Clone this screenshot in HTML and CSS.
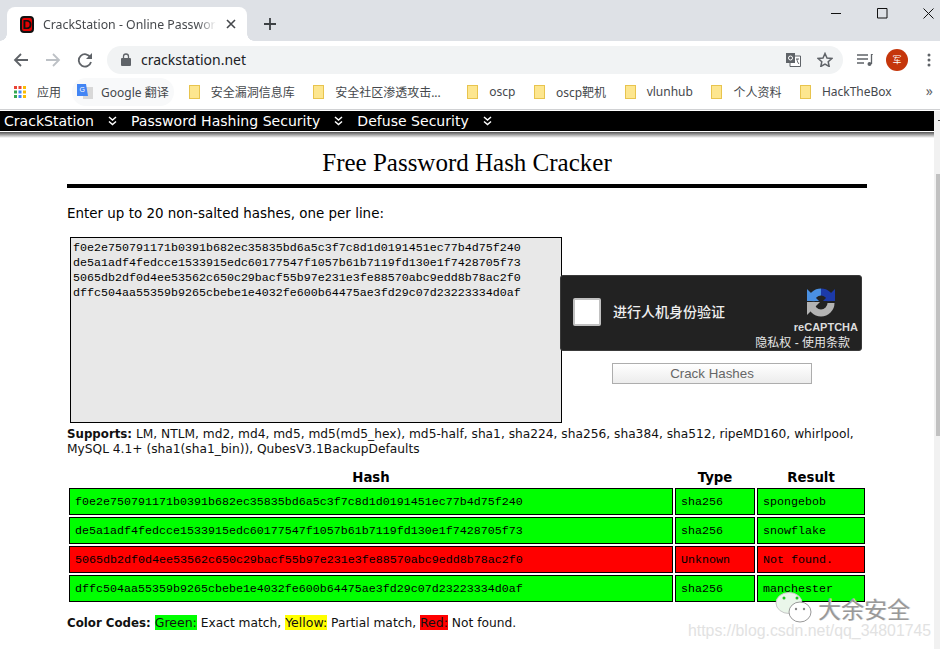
FILE: index.html
```html
<!DOCTYPE html>
<html lang="en">
<head>
<meta charset="utf-8">
<title>CrackStation - Online Password Hash Cracking</title>
<link rel="stylesheet" href="styles.css">
</head>
<body>
<header class="chrome">
  <div class="tabstrip">
    <div class="tab">
      <span class="favicon">D</span>
      <span class="tab-title">CrackStation - Online Passwor</span>
      <svg class="tab-x" width="10" height="10" viewBox="0 0 10 10"><path d="M1 1l8 8M9 1l-8 8" stroke="#45484c" stroke-width="1.6"/></svg>
    </div>
    <svg class="newtab" width="12" height="12" viewBox="0 0 12 12"><path d="M6 0v12M0 6h12" stroke="#3c4043" stroke-width="1.8"/></svg>
    <div class="winctl">
      <svg width="11" height="11" viewBox="0 0 11 11"><path d="M0 5.500h10" stroke="#111" stroke-width="1"/></svg>
      <svg width="11" height="11" viewBox="0 0 11 11"><path d="M.5 .5h9.500v9.500h-9.500z" fill="none" stroke="#111" stroke-width="1"/></svg>
      <svg width="11" height="11" viewBox="0 0 11 11"><path d="M.5 .5l10 10M10.500 .5l-10 10" stroke="#111" stroke-width="1"/></svg>
    </div>
  </div>
  <div class="toolbar">
    <svg class="nav-ico" width="16" height="16" viewBox="0 0 16 16"><path d="M15 8H2M8 2L2 8l6 6" fill="none" stroke="#5f6368" stroke-width="1.800"/></svg>
    <svg class="nav-ico" width="16" height="16" viewBox="0 0 16 16"><path d="M1 8h13M8 2l6 6-6 6" fill="none" stroke="#bdc1c6" stroke-width="1.800"/></svg>
    <svg class="nav-ico" width="16" height="16" viewBox="0 0 16 16"><path d="M13.500 5.500A6.200 6.200 0 1 0 14 10" fill="none" stroke="#5f6368" stroke-width="1.800"/><path d="M15 1v6H9z" fill="#5f6368"/></svg>
    <div class="omnibox">
      <svg class="lock" width="10" height="13" viewBox="0 0 10 13"><path d="M1 5h8a1 1 0 0 1 1 1v6a1 1 0 0 1-1 1H1a1 1 0 0 1-1-1V6a1 1 0 0 1 1-1z" fill="#5f6368"/><path d="M2.500 5V3.500a2.500 2.500 0 0 1 5 0V5" fill="none" stroke="#5f6368" stroke-width="1.300"/></svg>
      <span class="url">crackstation.net</span>
      <svg class="translate" width="15" height="14" viewBox="0 0 15 14"><path d="M4 3h10.500v10.500H4z" fill="#fff" stroke="#5f6368"/><path d="M0 0h9v10H0z" fill="#5f6368"/><circle cx="4.500" cy="5" r="2" fill="none" stroke="#fff"/><path d="M10 6h3M11 6c0 2 1 4 2 5" fill="none" stroke="#5f6368"/></svg>
      <svg class="star" width="16" height="15" viewBox="0 0 16 15"><path d="M8 1.500l2 4.500 4.800.5-3.600 3.200 1 4.800L8 12l-4.200 2.500 1-4.800L1.200 6.500 6 6z" fill="none" stroke="#5f6368" stroke-width="1.500"/></svg>
    </div>
    <svg class="media" width="16" height="12" viewBox="0 0 16 12"><path d="M0 1h11M0 5h11M0 9h7" stroke="#5f6368" stroke-width="1.300"/><path d="M14.500 0h1.500M14.500 0v10" stroke="#5f6368" stroke-width="1.300" fill="none"/><circle cx="12.500" cy="10" r="2" fill="#5f6368"/></svg>
    <span class="avatar">军</span>
    <svg class="menu" width="4" height="14" viewBox="0 0 4 14"><circle cx="2" cy="2" r="1.500" fill="#5f6368"/><circle cx="2" cy="7" r="1.500" fill="#5f6368"/><circle cx="2" cy="12" r="1.500" fill="#5f6368"/></svg>
  </div>
  <div class="bookmarks">
    <span class="bm bm-apps">
      <svg width="12" height="12" viewBox="0 0 12 12"><rect width="3" height="3" fill="#ea4335"/><rect x="4.500" width="3" height="3" fill="#ea4335"/><rect x="9" width="3" height="3" fill="#fbbc04"/><rect y="4.500" width="3" height="3" fill="#34a853"/><rect x="4.500" y="4.500" width="3" height="3" fill="#4285f4"/><rect x="9" y="4.500" width="3" height="3" fill="#fbbc04"/><rect y="9" width="3" height="3" fill="#34a853"/><rect x="4.500" y="9" width="3" height="3" fill="#4285f4"/><rect x="9" y="9" width="3" height="3" fill="#fbbc04"/></svg>
      应用
    </span>
    <span class="bm bm-gt">
      <svg width="16" height="16" viewBox="0 0 16 16"><path d="M6 3h10v12H6z" fill="#d8d8d8"/><path d="M0 0h9l2 12H0z" fill="#4285f4"/><text x="2.500" y="8" font-size="7" fill="#fff" font-family="Liberation Sans">G</text></svg>
      Google 翻译
    </span>
    <span class="bm"><i class="folder"></i>安全漏洞信息库</span>
    <span class="bm bm-wide"><i class="folder"></i>安全社区渗透攻击...</span>
    <span class="bm"><i class="folder"></i>oscp</span>
    <span class="bm"><i class="folder"></i>oscp靶机</span>
    <span class="bm"><i class="folder"></i>vlunhub</span>
    <span class="bm"><i class="folder"></i>个人资料</span>
    <span class="bm"><i class="folder"></i>HackTheBox</span>
    <span class="more">»</span>
  </div>
</header>
<div class="viewport">
  <nav class="sitenav">
    <span class="nav-item">CrackStation</span><svg class="chev" width="9" height="10" viewBox="0 0 9 10"><path d="M1 1l3.500 3L8 1M1 5.500l3.500 3 3.500-3" fill="none" stroke="#fff" stroke-width="1.500"/></svg>
    <span class="nav-item">Password Hashing Security</span><svg class="chev" width="9" height="10" viewBox="0 0 9 10"><path d="M1 1l3.500 3L8 1M1 5.500l3.500 3 3.500-3" fill="none" stroke="#fff" stroke-width="1.500"/></svg>
    <span class="nav-item">Defuse Security</span><svg class="chev" width="9" height="10" viewBox="0 0 9 10"><path d="M1 1l3.500 3L8 1M1 5.500l3.500 3 3.500-3" fill="none" stroke="#fff" stroke-width="1.500"/></svg>
  </nav>
  <main class="content">
    <h1>Free Password Hash Cracker</h1>
    <p class="intro">Enter up to 20 non-salted hashes, one per line:</p>
    <div class="form">
      <div class="hashbox">f0e2e750791171b0391b682ec35835bd6a5c3f7c8d1d0191451ec77b4d75f240
de5a1adf4fedcce1533915edc60177547f1057b61b7119fd130e1f7428705f73
5065db2df0d4ee53562c650c29bacf55b97e231e3fe88570abc9edd8b78ac2f0
dffc504aa55359b9265cbebe1e4032fe600b64475ae3fd29c07d23223334d0af</div>
      <div class="side">
        <div class="captcha">
          <span class="check"></span>
          <span class="cap-label">进行人机身份验证</span>
          <div class="cap-brand">
            <svg width="32" height="32" viewBox="0 0 32 32"><path d="M6 15A10 10 0 0 1 16 6" fill="none" stroke="#4a90e2" stroke-width="7"/><path d="M2 3l12 12H2z" fill="#4a90e2"/><path d="M16 6A10 10 0 0 1 26 15" fill="none" stroke="#1c3aa9" stroke-width="7"/><path d="M30 3v12H18z" fill="#1c3aa9"/><path d="M26 17A10 10 0 0 1 6 17" fill="none" stroke="#b3b3b3" stroke-width="7"/><path d="M2 16h13L2 29z" fill="#b3b3b3"/></svg>
            <span class="cap-name">reCAPTCHA</span>
            <span class="cap-links">隐私权 - 使用条款</span>
          </div>
        </div>
        <button class="crack" type="button">Crack Hashes</button>
      </div>
    </div>
    <p class="supports"><b>Supports:</b> LM, NTLM, md2, md4, md5, md5(md5_hex), md5-half, sha1, sha224, sha256, sha384, sha512, ripeMD160, whirlpool, MySQL 4.1+ (sha1(sha1_bin)), QubesV3.1BackupDefaults</p>
    <table class="results">
      <thead><tr><th>Hash</th><th>Type</th><th>Result</th></tr></thead>
      <tbody>
        <tr class="ok"><td>f0e2e750791171b0391b682ec35835bd6a5c3f7c8d1d0191451ec77b4d75f240</td><td>sha256</td><td>spongebob</td></tr>
        <tr class="ok"><td>de5a1adf4fedcce1533915edc60177547f1057b61b7119fd130e1f7428705f73</td><td>sha256</td><td>snowflake</td></tr>
        <tr class="bad"><td>5065db2df0d4ee53562c650c29bacf55b97e231e3fe88570abc9edd8b78ac2f0</td><td>Unknown</td><td>Not found.</td></tr>
        <tr class="ok"><td>dffc504aa55359b9265cbebe1e4032fe600b64475ae3fd29c07d23223334d0af</td><td>sha256</td><td>manchester</td></tr>
      </tbody>
    </table>
    <p class="codes"><b>Color Codes:</b> <span class="c-green">Green:</span> Exact match, <span class="c-yellow">Yellow:</span> Partial match, <span class="c-red">Red:</span> Not found.</p>
  </main>
  <div class="scrollbar"><div class="thumb"></div></div>
  <div class="watermark">
    <svg class="wechat" width="38" height="31" viewBox="0 0 38 31"><ellipse cx="14" cy="11" rx="13" ry="10.500" fill="#eaf6ea" stroke="#c8c8c8"/><ellipse cx="25" cy="20" rx="11" ry="10" fill="#fff" stroke="#999"/><circle cx="9" cy="6" r="1.500" fill="#1fc41f"/><circle cx="22" cy="6" r="1.500" fill="#1fc41f"/><circle cx="21" cy="17" r="1.200" fill="#888"/><circle cx="29" cy="17" r="1.200" fill="#888"/></svg>
    <span class="wm-name">大余安全</span>
    <span class="wm-url">https://blog.csdn.net/qq_34801745</span>
  </div>
</div>
</body>
</html>
```
FILE: styles.css
```css
* { box-sizing: border-box; }
html, body { margin: 0; height: 100%; overflow: hidden; }
body { width: 940px; height: 649px; background: #fff; font-family: "DejaVu Sans", sans-serif; display: flex; flex-direction: column; }

.chrome { flex: none; height: 110px; margin-bottom: 1px; background: #fff; border-bottom: 1px solid #d0d1d3; font-family: "Noto Sans", "Noto Sans CJK SC", sans-serif; }
.tabstrip { height: 41px; background: #dee1e6; display: flex; align-items: flex-end; padding-left: 7px; position: relative; }
.tab { width: 240px; height: 34px; background: #fff; border-radius: 8px 8px 0 0; display: flex; align-items: center; padding-left: 13px; position: relative; }
.tab::before, .tab::after { content: ""; position: absolute; bottom: 0; width: 7px; height: 7px; }
.tab::before { left: -7px; background: radial-gradient(circle at 0 0, #dee1e6 6.500px, #fff 7px); }
.tab::after { right: -7px; background: radial-gradient(circle at 100% 0, #dee1e6 6.500px, #fff 7px); }
.favicon { width: 14px; height: 17px; background: #e30000; border: 2px solid #111; border-radius: 4px; color: #111; font: bold 13px/13px "Liberation Sans", sans-serif; text-align: center; }
.tab-title { width: 175px; margin-left: 9px; font-size: 12.300px; color: #45484c; white-space: nowrap; overflow: hidden; -webkit-mask-image: linear-gradient(90deg, #000 88%, transparent 99%); mask-image: linear-gradient(90deg, #000 88%, transparent 99%); }
.tab-x { margin-left: 8px; }
.newtab { margin-left: 17px; margin-bottom: 11px; }
.winctl { position: absolute; right: 0; top: 8px; display: flex; gap: 35px; padding-right: 6px; }
.toolbar { height: 37px; display: flex; align-items: center; padding-left: 13px; }
.nav-ico { margin-right: 16px; flex: none; }
.omnibox { width: 736px; height: 28px; margin-left: -2px; background: #f1f3f4; border-radius: 14px; display: flex; align-items: center; padding-left: 14px; flex: none; }
.lock { flex: none; }
.url { margin-left: 10px; font-size: 14px; color: #202124; flex: 1; }
.translate { margin-right: 16px; }
.star { margin-right: 10px; }
.media { margin-left: 14px; flex: none; }
.avatar { width: 22px; height: 22px; margin-left: 13px; background: #c5360b; color: #fff; border-radius: 50%; font-size: 9px; line-height: 22px; text-align: center; flex: none; }
.menu { margin-left: 19px; flex: none; }
.bookmarks { height: 31px; display: flex; align-items: center; padding: 0 0 4px 14px; font-size: 12px; color: #45484c; position: relative; }
.bm { display: flex; align-items: center; margin-right: 18.500px; white-space: nowrap; }
.bm-apps { margin-right: 11px; }
.bm-apps svg { margin-right: 11px; }
.bm-gt { height: 28px; padding: 0 5px; margin-right: 15px; background: #f8f9fa; border-radius: 14px; }
.bm-gt svg { margin-right: 8px; }
.bm-wide { margin-right: 26.500px; }
.folder { width: 11px; height: 14px; margin-right: 11px; background: #fde68f; border: 1px solid #e8c44e; display: block; }
.more { position: absolute; right: 7px; top: 3px; font-size: 14px; color: #5f6368; }

.viewport { flex: 1; position: relative; min-height: 0; overflow: hidden; }
.sitenav { height: 20px; margin-right: 6px; background: #000; color: #fff; display: flex; align-items: center; padding-left: 4px; font-size: 14.050px; position: relative; }
.sitenav::after { content: ""; position: absolute; left: 0; right: 0; top: 21px; height: 6px; background: linear-gradient(#555, #fff); }
.sitenav .chev { margin: 0 14px; flex: none; }
.content { width: 800px; margin-left: 67px; color: #000; }
h1 { margin: 18px 0 0; padding-bottom: 7px; border-bottom: 4px solid #000; font: 400 25px/28px "Liberation Serif", serif; text-align: center; }
.intro { margin: 18px 0 0; font-size: 13.450px; line-height: 16px; }
.form { display: flex; margin: 15px 0 0 3px; }
.hashbox { width: 492px; height: 186px; flex: none; background: #e8e8e8; border: 1px solid #000; padding: 3px 2px; font: 11.670px/15px "Liberation Mono", monospace; white-space: pre; color: #000; }
.side { display: flex; flex-direction: column; align-items: center; padding-top: 38px; margin-left: -2px; }
.captcha { width: 302px; height: 76px; background: #222; border: 1px solid #3a3a3a; border-radius: 3px; display: flex; align-items: center; padding: 0 0 2px 12px; position: relative; color: #fff; font-family: "Liberation Sans", "Noto Sans CJK SC", sans-serif; }
.check { width: 28px; height: 28px; background: #fff; border: 2px solid #c1c1c1; border-radius: 2px; flex: none; }
.cap-label { margin: 0 0 3px 12px; font-size: 14px; color: #eee; font-weight: 500; }
.cap-brand { position: absolute; right: 3px; top: 0; bottom: 0; display: flex; flex-direction: column; align-items: flex-end; padding-top: 10px; }
.cap-brand svg { margin-right: 21px; }
.cap-name { font-size: 11px; font-weight: 700; color: #ddd; line-height: 13px; margin-top: 3px; }
.cap-links { font-size: 12px; line-height: 14px; color: #e5e5e5; margin-right: 8px; margin-top: 2px; white-space: nowrap; }
.crack { width: 200px; height: 21px; margin: 12px 0 0 2px; background: linear-gradient(#fff, #ececec); border: 1px solid #adadad; color: #666; font: 13.330px "Liberation Sans", sans-serif; padding: 0; }
.supports { margin: 4px 0 0; font-size: 12.230px; line-height: 15px; color: #111; }
.supports b, .codes b { font-size: 11.800px; }
.results { width: 800px; margin-top: 11px; border-collapse: separate; border-spacing: 2px; table-layout: fixed; }
.results th { font-size: 13.300px; padding: 0 0 1px; line-height: 15px; height: 16px; }
.results th:nth-child(1) { width: 604px; }
.results th:nth-child(2) { width: 80px; }
.results td { border: 1px solid #000; height: 27px; padding: 1px 4px 0 5px; font: 11.670px/15px "Liberation Mono", monospace; overflow: hidden; white-space: nowrap; }
.ok td { background: #0f0; }
.bad td { background: #f00; }
.codes { margin: 11px 0 0; font-size: 12.250px; line-height: 15px; color: #111; }
.c-green, .c-yellow, .c-red { font-size: 12.500px; }
.c-green { background: #0f0; }
.c-yellow { background: #ff0; }
.c-red { background: #f00; }

.scrollbar { position: absolute; right: 0; top: 0; bottom: 0; width: 6px; background: #f1f1f1; }
.scrollbar::before { content: ""; position: absolute; right: 0; top: 9px; width: 2px; height: 1px; background: #444; }
.thumb { position: absolute; top: 63px; height: 262px; left: 2px; right: 0; background: #c1c1c1; }
.watermark { position: absolute; inset: 0; pointer-events: none; }
.wechat { position: absolute; left: 775px; top: 481px; }
.wm-name { position: absolute; left: 818px; top: 484px; font: 23px/26px "Noto Sans CJK SC", sans-serif; color: #999; text-shadow: 1px 0 0 #ddd; white-space: nowrap; }
.wm-url { position: absolute; left: 688px; top: 511px; font: 15.850px/18px "Liberation Sans", sans-serif; color: #e2e2e2; white-space: nowrap; }
```
